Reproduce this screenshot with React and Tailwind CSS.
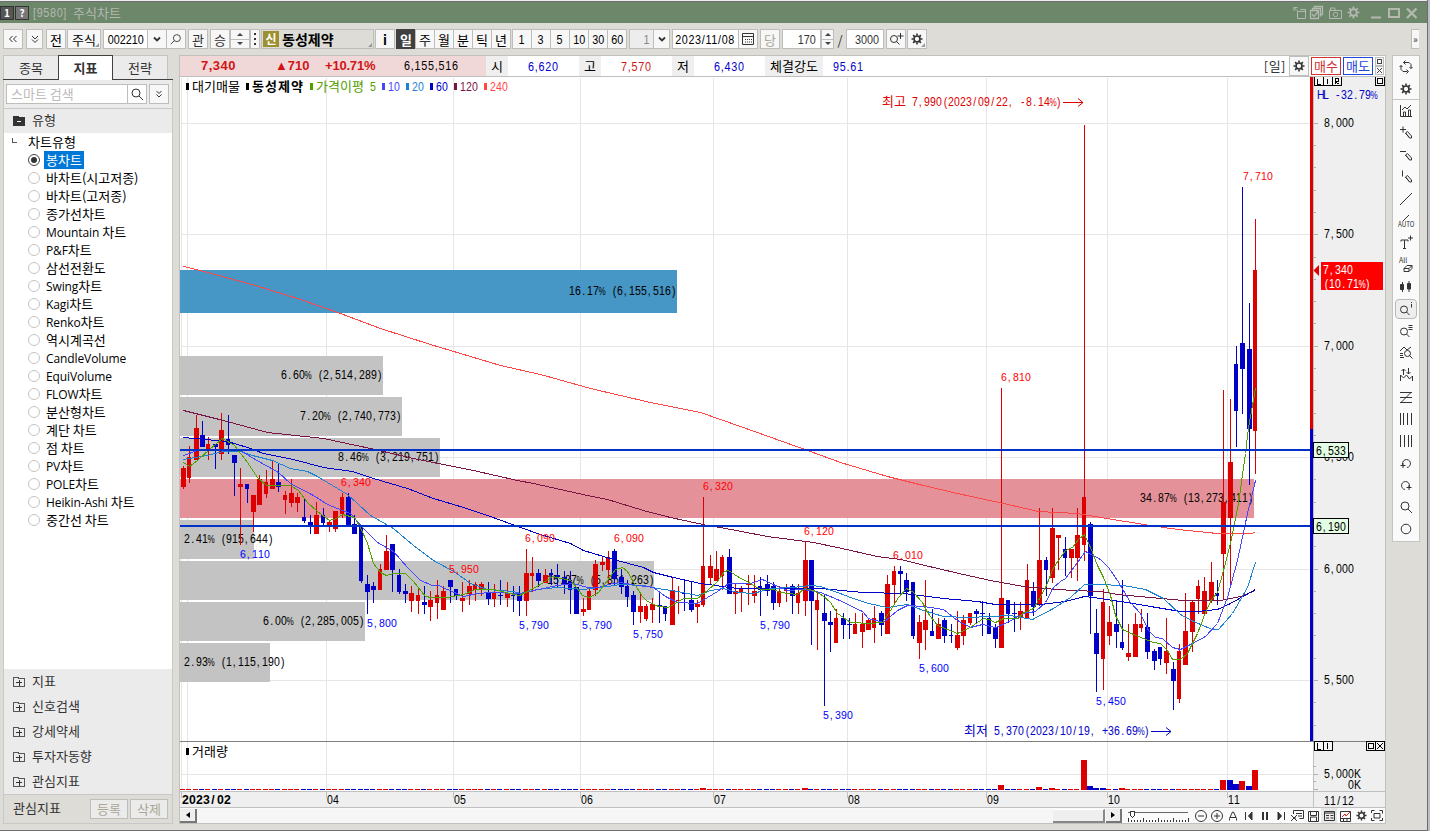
import React from 'react';
import clsx from 'clsx';

const RED = '#dc0000';
const BLUE = '#0000c8';

// high, body top, body bottom, low, direction (1 = up, 0 = down)
const candles = [
  [466, 468, 487, 489, 1], [446, 457, 478, 483, 1], [415, 428, 460, 460, 1], [421, 435, 447, 447, 0],
  [437, 444, 449, 460, 1], [444, 444, 447, 469, 0], [413, 430, 454, 460, 1], [415, 439, 445, 454, 0],
  [455, 455, 463, 496, 0], [468, 484, 487, 545, 1], [484, 484, 489, 503, 0], [495, 495, 512, 532, 1],
  [475, 479, 505, 505, 1], [470, 482, 494, 498, 1], [460, 479, 489, 489, 1], [464, 482, 487, 492, 0],
  [491, 495, 500, 514, 1], [479, 493, 503, 507, 1], [493, 497, 503, 512, 1], [498, 517, 521, 523, 0],
  [515, 522, 525, 534, 0], [502, 515, 534, 534, 1], [508, 515, 523, 525, 0], [520, 522, 527, 532, 1],
  [511, 511, 529, 532, 1], [493, 497, 514, 518, 1], [493, 497, 525, 525, 0], [515, 524, 534, 534, 0],
  [525, 525, 581, 583, 0], [575, 584, 592, 614, 0], [582, 586, 590, 603, 0], [564, 569, 590, 590, 1],
  [535, 551, 570, 570, 1], [544, 544, 570, 592, 0], [569, 575, 592, 594, 0], [584, 591, 594, 603, 0],
  [586, 593, 601, 612, 1], [589, 595, 601, 614, 1], [586, 602, 605, 614, 0], [591, 600, 607, 621, 1],
  [580, 595, 603, 619, 1], [586, 591, 610, 610, 1], [580, 580, 587, 603, 0], [589, 589, 596, 600, 0],
  [582, 598, 601, 612, 1], [580, 586, 594, 605, 1], [582, 584, 590, 601, 1], [582, 584, 589, 596, 1],
  [582, 593, 599, 605, 0], [584, 593, 599, 607, 1], [580, 595, 596, 605, 0], [582, 593, 598, 607, 1],
  [586, 595, 596, 612, 0], [586, 593, 601, 616, 0], [549, 573, 601, 616, 1], [557, 573, 576, 592, 1],
  [569, 573, 581, 587, 0], [569, 575, 583, 583, 1], [569, 573, 575, 585, 0], [564, 575, 577, 587, 0],
  [571, 577, 585, 594, 0], [571, 580, 590, 614, 0], [587, 587, 614, 614, 0], [598, 609, 612, 616, 1],
  [588, 591, 610, 610, 1], [560, 564, 590, 596, 1], [556, 562, 565, 571, 1], [551, 557, 570, 585, 1],
  [549, 551, 579, 585, 0], [569, 577, 587, 594, 0], [580, 586, 597, 607, 0], [591, 595, 612, 625, 0],
  [594, 606, 612, 623, 1], [604, 606, 619, 621, 1], [598, 604, 610, 623, 1], [593, 605, 606, 623, 0],
  [606, 606, 614, 621, 0], [577, 590, 625, 625, 1], [586, 600, 601, 614, 1], [580, 593, 594, 611, 0],
  [582, 600, 610, 612, 0], [600, 604, 607, 623, 1], [497, 566, 605, 607, 1], [555, 566, 578, 584, 1],
  [551, 569, 581, 581, 1], [555, 557, 576, 590, 1], [549, 557, 594, 594, 0], [584, 591, 594, 614, 1],
  [586, 588, 592, 612, 1], [575, 584, 585, 605, 1], [575, 591, 596, 603, 1], [577, 586, 590, 616, 0],
  [575, 584, 591, 596, 0], [582, 586, 603, 610, 0], [586, 591, 603, 607, 1], [584, 590, 591, 602, 1],
  [584, 586, 596, 614, 0], [584, 593, 603, 614, 1], [541, 560, 601, 616, 1], [560, 560, 601, 645, 0],
  [591, 600, 610, 650, 1], [595, 613, 621, 706, 0], [611, 622, 625, 652, 0], [609, 618, 643, 643, 1],
  [613, 618, 625, 639, 0], [618, 624, 625, 639, 0], [613, 624, 634, 634, 1], [613, 624, 632, 648, 1],
  [618, 620, 630, 630, 1], [606, 618, 628, 643, 1], [611, 613, 625, 636, 0], [575, 584, 634, 634, 1],
  [566, 571, 585, 603, 1], [566, 571, 574, 593, 0], [573, 580, 592, 601, 0], [582, 582, 636, 639, 0],
  [615, 622, 643, 659, 1], [580, 620, 630, 650, 1], [609, 631, 636, 636, 0], [618, 624, 639, 639, 1],
  [618, 620, 636, 643, 0], [624, 635, 636, 643, 0], [611, 635, 648, 650, 1], [615, 620, 636, 645, 1],
  [613, 613, 623, 625, 1], [609, 611, 614, 623, 0], [601, 613, 614, 636, 0], [613, 618, 634, 634, 0],
  [624, 627, 639, 648, 0], [388, 598, 648, 648, 1], [600, 600, 614, 623, 0], [602, 613, 614, 632, 0],
  [602, 611, 618, 630, 1], [564, 580, 618, 618, 1], [582, 591, 607, 616, 0], [508, 560, 605, 606, 1],
  [557, 560, 570, 596, 0], [508, 528, 578, 583, 1], [535, 535, 538, 570, 1], [537, 549, 558, 576, 0],
  [549, 549, 558, 578, 1], [508, 535, 558, 581, 1], [125, 497, 545, 561, 1], [522, 524, 596, 634, 0],
  [609, 633, 654, 692, 0], [589, 602, 659, 690, 1], [606, 622, 636, 645, 1], [600, 624, 632, 648, 0],
  [580, 642, 648, 650, 0], [624, 653, 657, 661, 1], [613, 624, 657, 657, 1], [609, 624, 628, 632, 1],
  [613, 627, 652, 659, 0], [649, 651, 661, 670, 0], [647, 647, 659, 665, 0], [618, 651, 663, 674, 1],
  [662, 669, 681, 710, 0], [644, 651, 699, 703, 1], [593, 631, 665, 665, 1], [600, 602, 632, 652, 1],
  [580, 586, 599, 614, 1], [577, 591, 614, 616, 1], [562, 582, 600, 603, 1], [580, 593, 596, 605, 0],
  [390, 502, 554, 600, 1], [399, 462, 518, 585, 1], [346, 364, 411, 447, 0], [187, 343, 369, 414, 0],
  [303, 349, 429, 485, 0], [219, 270, 431, 474, 1],
];

const volumes = {
  82: [2, 1], 98: [2, 1], 129: [5, 1], 135: [3, 1], 137: [2, 1], 142: [30, 1], 143: [4, 0], 144: [2, 0], 145: [2, 0],
  148: [2, 1], 164: [10, 1], 165: [10, 0], 166: [6, 0], 167: [9, 1], 168: [4, 0], 169: [20, 1],
};

const averages = [
  ['#ff4646', '183,266 200,270 255,285 300,299 340,313 380,328 430,344 500,365 540,374 590,388 650,402 700,412 740,426 810,451 840,462 887,476 923,485 957,493 1003,503 1038,511 1077,513 1100,517 1150,525 1170,528 1187,530 1217,533 1250,533 1255,532'],
  ['#781446', '183,410 223,420 267,432 323,438 370,448 413,458 473,470 517,480 533,483 587,495 607,499 643,510 670,517 707,525 720,527 767,536 813,542 837,547 877,556 900,559 933,567 963,574 990,580 1023,586 1043,588 1073,590 1100,591 1117,594 1150,597 1183,600 1220,600 1240,596 1255,590'],
  ['#0000c8', '183,437 227,441 247,447 263,453 293,459 323,467 352,471 373,478 407,488 433,498 463,507 490,516 520,527 540,534 570,543 583,550 613,559 643,567 653,572 673,577 700,583 737,588 773,588 820,588 863,592 903,593 943,598 977,601 995,604 1040,604 1065,601 1084,596 1100,598 1133,603 1150,606 1180,611 1197,611 1217,609 1230,603 1255,589'],
  ['#1e82d2', '183,459 207,455 222,451 240,451 252,455 272,460 290,468 307,471 315,475 327,482 347,494 357,503 370,515 393,528 413,545 433,560 455,572 470,583 487,589 513,591 520,593 537,589 557,587 583,589 607,586 620,584 643,585 657,588 677,591 697,595 710,590 723,588 737,592 753,593 770,588 792,587 810,585 820,586 837,592 850,597 868,603 887,607 907,604 923,610 943,616 967,617 990,616 1010,615 1032,619 1053,608 1070,597 1084,584 1098,584 1123,585 1145,589 1163,598 1180,614 1193,621 1212,629 1218,629 1232,613 1247,587 1255,562'],
  ['#4646ff', '183,455 197,450 240,450 253,458 278,472 290,483 313,495 327,504 342,510 350,513 362,527 377,542 393,551 407,567 420,580 432,585 438,585 447,589 463,596 477,593 490,592 520,593 538,589 557,585 573,583 587,587 598,587 608,584 620,582 637,585 653,587 665,596 677,602 697,603 707,597 717,591 728,583 750,583 762,579 775,585 787,590 803,589 820,592 837,599 862,611 868,618 883,622 897,610 907,605 923,606 943,609 957,620 970,627 982,624 995,627 1007,622 1023,613 1035,611 1045,602 1053,587 1060,581 1065,578 1077,562 1085,551 1100,559 1108,567 1117,580 1130,602 1140,613 1148,630 1155,637 1162,638 1172,647 1180,649 1192,643 1205,636 1217,623 1227,597 1237,560 1247,513 1255,480'],
  ['#50a000', '183,462 189,466 197,460 209,449 222,438 234,445 247,462 257,477 266,485 290,485 298,490 307,502 317,511 329,520 336,518 342,514 354,517 360,527 367,543 373,563 380,572 386,575 393,573 405,573 413,581 425,596 431,597 447,597 463,594 475,589 494,589 505,592 519,595 527,591 540,584 552,576 570,580 577,588 582,595 589,597 598,592 607,580 615,569 622,567 627,571 635,585 642,596 647,601 658,606 668,607 683,598 697,598 707,590 717,581 724,571 728,570 737,576 750,583 760,589 773,589 780,592 797,594 804,588 813,590 822,595 830,602 837,613 843,617 850,622 870,623 882,622 890,610 898,597 906,588 913,592 922,602 927,612 937,625 947,629 957,633 968,628 983,618 988,619 995,622 1003,618 1018,618 1022,613 1033,608 1038,600 1046,585 1053,567 1065,550 1072,547 1078,539 1084,534 1090,547 1097,565 1103,577 1110,595 1115,615 1122,629 1133,634 1153,642 1160,643 1167,650 1172,659 1180,659 1187,653 1197,633 1205,612 1211,599 1217,592 1223,570 1230,543 1238,503 1245,453 1248,427 1252,405 1255,388'],
];

// y, height, right edge, colour, label, label x
const bands = [
  [270, 43, 677, '#4696c6', '16.17% (6,155,516)', 569],
  [356, 39, 383, '#c3c3c3', '6.60% (2,514,289)', 281],
  [397, 39, 402, '#c3c3c3', '7.20% (2,740,773)', 300],
  [438, 39, 440, '#c3c3c3', '8.46% (3,219,751)', 338],
  [479, 39, 1254, '#e59199', '34.87% (13,273,411)', 1140],
  [520, 39, 254, '#c3c3c3', '2.41% (915,644)', 184],
  [561, 39, 654, '#c3c3c3', '15.37% (5,851,263)', 547],
  [602, 39, 365, '#c3c3c3', '6.00% (2,285,005)', 263],
  [643, 39, 270, '#c3c3c3', '2.93% (1,115,190)', 184],
];

const peaks = [
  ['6,340', 341, 482], ['5,950', 449, 569], ['6,090', 525, 538], ['6,090', 614, 538], ['6,320', 703, 486],
  ['6,120', 804, 531], ['6,010', 893, 555], ['6,810', 1001, 377], ['7,710', 1243, 176],
];
const troughs = [
  ['6,110', 240, 554], ['5,800', 367, 623], ['5,790', 519, 625], ['5,790', 582, 625], ['5,750', 633, 634],
  ['5,790', 760, 625], ['5,390', 823, 715], ['5,600', 919, 668], ['5,450', 1096, 701],
];

const months = [['04', 326], ['05', 453], ['06', 580], ['07', 713], ['08', 847], ['09', 986], ['10', 1107], ['11', 1227]];
const prices = [['8,000', 123], ['7,500', 234], ['7,000', 346], ['6,500', 457], ['6,000', 569], ['5,500', 680]];

const chartTypes = [
  '봉차트', '바차트(시고저종)', '바차트(고저종)', '종가선차트', 'Mountain 차트', 'P&F차트', '삼선전환도', 'Swing차트',
  'Kagi차트', 'Renko차트', '역시계곡선', 'CandleVolume', 'EquiVolume', 'FLOW차트', '분산형차트', '계단 차트',
  '점 차트', 'PV차트', 'POLE차트', 'Heikin-Ashi 차트', '중간선 차트',
];

const candleX = (i) => 183.6 + i * 6.343;

// how far a narrow glyph is moved inside its cell
const nudge = { ',': 0.8, '.': 1.2, '/': 1.3, '(': 1.8, ')': 1, '-': 1, '%': -0.4 };

// Fixed pitch label: 6px per latin character, 12px per hangul syllable
const Label = ({ x, y, children, fill = '#000', size = 13, bold = false, pitch = 6 }) => {
  const squeeze = pitch / (size * 0.57);
  let at = x;
  return children.match(/[가-힣]+|[^가-힣]+/g).map((run) => {
    const wide = run[0] >= '가';
    const step = wide ? pitch * 2 : pitch;
    const scale = wide ? 1 : squeeze;
    const xs = [...run].map((c, i) => ((at + i * step + (nudge[c] || 0)) / scale).toFixed(2)).join(' ');
    at += run.length * step;
    return (
      <text
        key={at}
        className="whitespace-pre"
        x={xs}
        y={y}
        transform={wide ? undefined : `scale(${scale} 1)`}
        fill={fill}
        fontSize={size}
        fontWeight={bold ? 700 : 400}
      >
        {run.split(/(%)/).map((part, i) => (part === '%' ? <tspan key={i} fontSize={size - 3}>%</tspan> : part))}
      </text>
    );
  });
};

const Arrow = ({ x, y, color }) => (
  <path d={`M${x} ${y}h20m-5 -4l5 4l-5 4`} fill="none" stroke={color} />
);

const BoxGlyph = ({ x, y, children }) => (
  <g>
    <rect x={x + 0.5} y={y + 0.5} width="9" height="9" fill="#f5f5f5" stroke="#000" />
    {children}
  </g>
);

const Chart = () => (
  <svg
    className="block h-[731px] w-[1205px] font-['Liberation_Sans','Noto_Sans_CJK_KR',sans-serif]"
    viewBox="180 77 1205 731"
  >
    <g shapeRendering="crispEdges">
      <rect x="180" y="77" width="1134" height="715" fill="#fff" />
      <rect x="1314" y="77" width="72" height="731" fill="#efefef" />
      <rect x="180" y="792" width="1134" height="16" fill="#efefef" />
      <g fill="#e6e6e6">
        <rect x="181" y="78" width="1" height="712" />
        <rect x="187" y="78" width="1" height="712" />
        {months.map(([m, x]) => <rect key={m} x={x} y="78" width="1" height="712" />)}
        {prices.map(([p, y]) => <rect key={p} x="181" y={y} width="1130" height="1" />)}
        <rect x="181" y="774" width="1132" height="1" />
      </g>
      {bands.map(([y, h, right, fill]) => (
        <rect key={y} x="180" y={y} width={right - 180} height={h} fill={fill} />
      ))}
    </g>

    {bands.map(([y, h, , , text, x]) => (
      <Label key={y} x={x} y={y + Math.floor(h / 2) + 4}>{text}</Label>
    ))}

    <g shapeRendering="crispEdges">
      {candles.map(([hi, top, bottom, lo, up], i) => {
        const x = Math.floor(candleX(i));
        return (
          <g key={i} fill={up ? RED : BLUE}>
            <rect x={x} y={hi} width="1" height={Math.max(1, lo - hi)} />
            <rect x={x - 2} y={top} width={i % 3 === 1 ? 4 : 5} height={Math.max(1, bottom - top)} />
          </g>
        );
      })}
      {candles.map((c, i) => {
        const [h, up] = volumes[i] || [1, c[4]];
        return <rect key={i} x={Math.floor(candleX(i)) - 3} y={790 - h} width={h > 1 ? 6 : 5} height={h} fill={up ? RED : BLUE} />;
      })}
      {averages.map(([color, points]) => (
        <polyline key={color} points={points} fill="none" stroke={color} strokeWidth="1" transform="translate(0.5 0.5)" />
      ))}
      <rect x="180" y="449" width="1133" height="2" fill="#0032c8" />
      <rect x="180" y="525" width="1133" height="2" fill="#0032c8" />
    </g>

    {peaks.map(([t, x, y]) => <Label key={t + x} x={x} y={y + 4} size={11.5} fill="#ff0000">{t}</Label>)}
    {troughs.map(([t, x, y]) => <Label key={t + x} x={x} y={y + 4} size={11.5} fill="#0000ff">{t}</Label>)}
    <Label x={882} y={106} fill={RED}>최고 7,990(2023/09/22, -8.14%)</Label>
    <Arrow x={1063} y={102.5} color={RED} />
    <Label x={964} y={735} fill={BLUE}>최저 5,370(2023/10/19, +36.69%)</Label>
    <Arrow x={1151} y={731.5} color={BLUE} />

    {/* legend */}
    <g shapeRendering="crispEdges">
      <rect x="186" y="83" width="3" height="7" />
      <rect x="246" y="83" width="3" height="7" />
      <rect x="310" y="83" width="3" height="7" fill="#50a000" />
      <rect x="382" y="83" width="3" height="7" fill="#4646ff" />
      <rect x="406" y="83" width="3" height="7" fill="#1e82d2" />
      <rect x="430" y="83" width="3" height="7" fill="#0000c8" />
      <rect x="454" y="83" width="3" height="7" fill="#781446" />
      <rect x="484" y="83" width="3" height="7" fill="#ff4646" />
      <rect x="186" y="748" width="3" height="7" />
    </g>
    <Label x={192} y={91}>대기매물</Label>
    <Label x={252} y={91} bold pitch={6.5}>동성제약</Label>
    <Label x={316} y={91} fill="#50a000">가격이평 5</Label>
    <Label x={388} y={91} fill="#4646ff">10</Label>
    <Label x={412} y={91} fill="#1e82d2">20</Label>
    <Label x={436} y={91} fill="#0000c8">60</Label>
    <Label x={460} y={91} fill="#781446">120</Label>
    <Label x={490} y={91} fill="#ff4646">240</Label>
    <Label x={192} y={756}>거래량</Label>

    {/* price axis */}
    <g shapeRendering="crispEdges">
      <rect x="1313" y="77" width="1" height="731" fill="#c0c0c0" />
      <rect x="1310" y="77" width="3" height="352" fill={RED} />
      <rect x="1310" y="429" width="3" height="312" fill={BLUE} />
      {prices.map(([p, y]) => <rect key={p} x="1314" y={y} width="4" height="1" fill="#b0b0b0" />)}
      {[145, 167, 190, 212, 257, 279, 301, 323, 368, 390, 413, 435, 479, 502, 524, 546, 591, 613, 635, 658, 702, 725, 766, 774, 781, 789].map((y) => (
        <rect key={y} x="1314" y={y} width={y === 774 || y === 789 ? 4 : 2} height="1" fill="#b0b0b0" />
      ))}
      <rect x="180" y="741" width="1205" height="1" fill="#808080" />
      <rect x="180" y="791" width="1205" height="1" fill="#c0c0c0" />
      {months.map(([m, x]) => <rect key={m} x={x} y="792" width="1" height="6" fill="#c0c0c0" />)}
      <rect x="181" y="792" width="1" height="6" fill="#c0c0c0" />
      <rect x="180" y="807" width="1205" height="1" fill="#c0c0c0" />
    </g>
    {prices.map(([p, y]) => <Label key={p} x={1324} y={y + 4}>{p}</Label>)}
    <Label x={1317} y={99} fill={BLUE}>HL -32.79%</Label>
    <path d="M1313.5 270.5l5.5 -5.5v11z" fill="#e00000" />
    <rect x="1321" y="262" width="62" height="28" fill="#ff0000" />
    <Label x={1323} y={274} fill="#fff">7,340</Label>
    <Label x={1323} y={288} fill="#fff">(10.71%)</Label>
    {[['6,533', 442], ['6,190', 518]].map(([t, y]) => (
      <g key={t}>
        <rect x="1313.5" y={y + 0.5} width="35" height="15" fill="#e4ffe4" stroke="#000" />
        <Label x={1316} y={y + 13}>{t}</Label>
      </g>
    ))}
    <g fill="none" stroke="#000" shapeRendering="crispEdges">
      <BoxGlyph x={1314} y={76}><path d="M1317.5 79v5h3" /></BoxGlyph>
      <BoxGlyph x={1323} y={76}><path d="M1327.5 79v5" /></BoxGlyph>
      <BoxGlyph x={1332} y={76}><path d="M1335.5 84v-5.500h3v3h-3l3 2.500" /></BoxGlyph>
      <BoxGlyph x={1375} y={76}><rect x="1377.5" y="78.500" width="5" height="5" /></BoxGlyph>
      <BoxGlyph x={1314} y={741}><path d="M1317.5 743v6h3" /></BoxGlyph>
      <BoxGlyph x={1323} y={741}><path d="M1327.5 743v6" /></BoxGlyph>
      <BoxGlyph x={1366} y={741}><rect x="1368.5" y="743.5" width="5" height="5" /></BoxGlyph>
      <BoxGlyph x={1375} y={741}><path d="M1377 743l6 6m0 -6l-6 6" /></BoxGlyph>
    </g>
    <Label x={1324} y={778}>5,000K</Label>
    <Label x={1348} y={789}>0K</Label>
    <Label x={1324} y={805}>11/12</Label>
    <Label x={182} y={804} bold pitch={7}>2023/02</Label>
    {months.map(([m, x]) => <Label key={m} x={x + 1} y={804}>{m}</Label>)}
  </svg>
);

const Svg = ({ children, className = 'h-4 w-4' }) => (
  <svg viewBox="0 0 16 16" className={clsx('shrink-0', className)} fill="none" stroke="currentColor" strokeWidth="1">
    {children}
  </svg>
);

const Gear = ({ className = 'h-3 w-3' }) => (
  <svg viewBox="0 0 12 12" className={clsx('shrink-0', className)} fill="none" stroke="currentColor">
    <circle cx="6" cy="6" r="3" strokeWidth="1.700" />
    <path d="M6 .5v2M6 9.500v2M.5 6h2M9.500 6h2M2.100 2.100l1.500 1.500M8.400 8.400l1.500 1.500M2.100 9.900l1.500-1.500M8.400 3.600l1.500-1.500" strokeWidth="1.600" />
  </svg>
);

const Magnifier = ({ className, flip = false }) => (
  <Svg className={className}>
    <g transform={flip ? 'matrix(-1 0 0 1 16 0)' : undefined}>
      <circle cx="7" cy="7" r="4" />
      <path d="M10 10l4 4" />
    </g>
  </Svg>
);

const Corner = () => (
  <svg viewBox="0 0 4 4" className="absolute right-px bottom-px h-1 w-1"><path d="M4 0v4H0z" fill="#999" /></svg>
);

const Btn = ({ className = '', children }) => (
  <div className={clsx('relative flex h-5 shrink-0 items-center justify-center border border-[#bdbdb9] bg-[#f7f7f7]', className)}>
    {children}
  </div>
);

const Spinner = ({ className }) => (
  <div className={clsx('flex h-5 shrink-0 flex-col border border-[#bdbdb9] bg-[#f7f7f7]', className)}>
    <div className="flex flex-1 items-center justify-center border-b border-[#bdbdb9]">
      <svg viewBox="0 0 6 3" className="h-[3px] w-1.5"><path d="M0 3l3-3l3 3z" fill="#444" /></svg>
    </div>
    <div className="flex flex-1 items-center justify-center">
      <svg viewBox="0 0 6 3" className="h-[3px] w-1.5"><path d="M0 0l3 3l3-3z" fill="#444" /></svg>
    </div>
  </div>
);

// Condensed digits used by every numeric field
const Num = ({ className = '', children }) => (
  <span className={clsx("inline-block shrink-0 scale-x-[0.83] whitespace-nowrap font-['Liberation_Sans',sans-serif] text-[13px]", className)}>
    {children}
  </span>
);

const TitleBar = () => (
  <div className="flex h-[21px] w-[1427px] items-center bg-[#6d876b] text-[#b4b9b0]">
    <div className="flex h-[14px] w-[14px] items-center justify-center border border-[#333] bg-[#555] text-[10px] font-bold text-white">1</div>
    <div className="ml-px flex h-[14px] w-[14px] items-center justify-center border border-[#333] bg-[#777] text-[10px] font-bold text-white">?</div>
    <Num className="ml-1 w-[34px] origin-left tracking-[0.8px]">[9580]</Num>
    <span className="ml-1.5 text-[13px]">주식차트</span>
    <div className="ml-auto flex items-center pr-[7px]">
      <Svg><path d="M5 13.500h8.500v-9h-5M13.500 6.500h-8v4M5.500 10v3.500M2 2.500l4 4M2 6V2.500h3.500M8.500 4.500h5" /></Svg>
      <Svg className="ml-px h-4 w-4"><path d="M5.500 4v-2.500h8v8h-2M3.500 6.500v-3h8v8M1.500 5.500h8v8h-8zM3 9l2 2.500l4-5" strokeWidth="1.300" /></Svg>
      <Svg className="ml-0.5 h-4 w-4"><path d="M2.500 5.500h12v8h-12zM3.500 5v-2h4l1 2" /><circle cx="8.500" cy="9.500" r="2.200" /></Svg>
      <Gear className="ml-1 h-[13px] w-[13px]" />
      <Svg className="ml-2 h-4 w-4"><path d="M3 12.500h10" strokeWidth="2" /></Svg>
      <Svg className="ml-0.5 h-4 w-4"><path d="M3 4h10v8h-10z" strokeWidth="2" /></Svg>
      <Svg className="ml-0.5 h-4 w-4"><path d="M3 3.500l9.500 9.500M12.500 3.500l-9.500 9.500" strokeWidth="2.300" /></Svg>
    </div>
  </div>
);

const periods = ['주', '월', '분', '틱', '년'];
const minutes = ['3', '5', '10', '30', '60'];

const Toolbar = () => (
  <div className="flex h-[32px] items-center pl-[3px] text-[13px] leading-none text-[#333]">
    <Btn className="w-5"><Svg><path d="M7.500 5l-3 3l3 3M11.500 5l-3 3l3 3" /></Svg></Btn>
    <Btn className="ml-[3px] w-[17px]"><Svg><path d="M5 5l3 3l3-3M5 8.500l3 3l3-3" /></Svg></Btn>
    <Btn className="ml-[3px] w-5 text-black">전</Btn>
    <Btn className="ml-px w-[34px] text-black">주식<Corner /></Btn>
    <Btn className="ml-0.5 w-[45px] bg-white! text-black"><Num>002210</Num></Btn>
    <Btn className="-ml-px w-5"><Svg><path d="M5 6.500l3 3l3-3" strokeWidth="1.800" /></Svg></Btn>
    <Btn className="-ml-px w-5"><Magnifier flip className="h-3.5 w-3.5" /></Btn>
    <Btn className="ml-0.5 w-5">관</Btn>
    <Btn className="ml-0.5 w-5">승</Btn>
    <Spinner className="w-5" />
    <Btn className="w-2.5"><svg viewBox="0 0 2 12" className="h-3 w-0.5" fill="#333"><path d="M0 0h2v2H0zM0 5h2v2H0zM0 10h2v2H0z" /></svg></Btn>
    <Btn className="ml-px w-[113px] justify-start! bg-[#dddcd6]!">
      <span className="ml-px flex h-4 w-4 items-center justify-center bg-[#9d9030] text-[12px] font-bold text-white">신</span>
      <span className="ml-[3px] text-[14px] font-bold text-black">동성제약</span>
      <Corner />
    </Btn>
    <Btn className="ml-px w-5 font-bold text-black">i</Btn>
    <Btn className="ml-px w-5 border-[#404040]! bg-[#404040]! font-bold text-white">일</Btn>
    {periods.map((p) => <Btn key={p} className="-ml-px w-5 text-black">{p}</Btn>)}
    <Btn className="ml-px w-5 text-black"><Num>1</Num></Btn>
    {minutes.map((m) => <Btn key={m} className="-ml-px w-5 text-black"><Num>{m}</Num></Btn>)}
    <Btn className="ml-0.5 w-[25px] justify-end! bg-[#ededed]! pr-[3px] text-[#888]"><Num>1</Num></Btn>
    <Btn className="-ml-px w-[17px]"><Svg><path d="M5 6.500l3 3l3-3" strokeWidth="1.800" /></Svg></Btn>
    <Btn className="ml-0.5 w-[67px] bg-white! text-black"><Num className="tracking-[0.8px]">2023/11/08</Num></Btn>
    <Btn className="-ml-px w-5"><Svg><path d="M2.500 2.500h11v11h-11zM2.500 5.500h11" /><path d="M5 8.500h7M5 11h7" strokeDasharray="1 1" /></Svg></Btn>
    <Btn className="ml-0.5 w-5 text-[#aaa796]">당</Btn>
    <Btn className="ml-0.5 w-[39px] justify-end! bg-white! pr-1"><Num className="origin-right">170</Num></Btn>
    <Spinner className="w-[13px]" />
    <span className="w-3 text-center">/</span>
    <Btn className="w-[38px] justify-end! bg-white! pr-1"><Num className="origin-right">3000</Num></Btn>
    <Btn className="ml-0.5 w-5"><Svg><circle cx="6" cy="8" r="3.500" /><path d="M8.500 10.500l3 3M12.500 2v6M9.500 5h6" /></Svg></Btn>
    <Btn className="ml-px w-5"><Gear /><Corner /></Btn>
    <Btn className="ml-auto mr-[8px] w-2 border-r-0! text-[10px]">»</Btn>
  </div>
);

const Folder = ({ open = false }) => (
  <svg viewBox="0 0 12 12" className="mt-0.5 h-3 w-3" stroke={open ? '#333' : '#555'} fill={open ? '#333' : 'none'} shapeRendering="crispEdges">
    <path d="M.5 1.500h5v1h6v8h-11z" />
    <path d={open ? 'M4 6.500h4' : 'M3 6.500h6M6 4v5.500'} stroke={open ? '#fff' : '#333'} />
  </svg>
);

// Latin runs sit a size below the hangul beside them
const Mixed = ({ text }) =>
  text.match(/[A-Za-z&-]+|[^A-Za-z&-]+/g).map((run) =>
    /[A-Za-z]/.test(run)
      ? <span key={run} className="font-['Open_Sans','Noto_Sans',sans-serif] text-[12px] tracking-[-0.1px]">{run}</span>
      : <span key={run}>{run}</span>
  );

const Sidebar = () => (
  <div className="flex h-[769px] w-[170px] flex-col text-[#333]">
    <div className="flex h-[25px] border-b border-[#404040] text-[13px]">
      <div className="flex h-6 w-[55px] items-center justify-center border-t border-l border-[#c4c4c4] bg-[#ebebeb]">종목</div>
      <div className="flex h-[25px] w-[55px] items-center justify-center border border-b-0 border-[#404040] bg-white font-bold">지표</div>
      <div className="flex h-6 w-[55px] items-center justify-center border-t border-r border-[#c4c4c4] bg-[#ebebeb]">전략</div>
    </div>
    <div className="flex h-[28px] items-center border-x border-[#c8c8c8] bg-[#ebebeb] pl-0.5">
      <Btn className="w-[122px] justify-start! bg-white! pl-1 text-[13px] text-[#bbb]">스마트 검색</Btn>
      <Btn className="-ml-px w-5 bg-white!"><Magnifier className="h-4 w-4" /></Btn>
      <Btn className="ml-0.5 w-5"><Svg><path d="M5.500 5l2.500 2.500l2.500-2.500M5.500 8.500l2.500 2.500l2.500-2.500" /></Svg></Btn>
    </div>
    <div className="flex h-[25px] items-center gap-[7px] border border-b-0 border-[#c8c8c8] bg-[#ebebeb] pb-0.5 pl-[9px] text-[13px]">
      <Folder open />유형
    </div>
    <div className="h-[536px] border-x border-[#c8c8c8] bg-white text-[13px] leading-[18px] text-black">
      <div className="flex h-[18px] items-center">
        <span className="mb-1 ml-2 h-[5px] w-[5px] border-b border-l border-[#555]" />
        <span className="ml-[11px] pb-px">차트유형</span>
      </div>
      {chartTypes.map((name, i) => (
        <div key={name} className="flex h-[18px] items-center pl-6">
          <span className={clsx('flex h-3 w-3 items-center justify-center rounded-full border bg-white', i ? 'border-[#c4c4c4]' : 'border-[#444]')}>
            {i === 0 && <span className="h-1.5 w-1.5 rounded-full bg-[#333]" />}
          </span>
          <span className={clsx('ml-1 h-[18px] px-0.5 leading-[17px] whitespace-pre', i === 0 && 'bg-[#0078d7] text-white')}><Mixed text={name} /></span>
        </div>
      ))}
    </div>
    <div className="h-[125px] border-x border-[#c8c8c8] bg-[#ebebeb] text-[13px]">
      {['지표', '신호검색', '강세약세', '투자자동향', '관심지표'].map((name) => (
        <div key={name} className="flex h-[25px] items-center gap-[7px] pb-0.5 pl-[9px]"><Folder />{name}</div>
      ))}
    </div>
    <div className="flex h-[30px] items-center border border-[#c8c8c8] pl-[9px] text-[13px]">
      <span className="pb-0.5">관심지표</span>
      <Btn className="ml-auto w-[38px] bg-[#ebebeb]! text-[#aaa796]">등록</Btn>
      <Btn className="mr-1 ml-0.5 w-[38px] bg-[#ebebeb]! text-[#aaa796]">삭제</Btn>
    </div>
  </div>
);

const InfoBar = () => (
  <div className="flex h-[21px] items-stretch border-b border-[#c0c0c0] bg-white text-[13px] leading-5">
    <div className="flex w-[306px] bg-[#f0d8d8] font-bold text-[#d21414]">
      <Num className="ml-[21px] w-[74px] scale-x-100! tracking-[0.5px]">7,340</Num>
      <Num className="w-[50px] scale-x-100!">▲710</Num>
      <Num className="w-[79px] scale-x-100! tracking-[-0.2px]">+10.71%</Num>
      <Num className="origin-left font-normal tracking-[0.9px] text-black">6,155,516</Num>
    </div>
    <div className="w-[22px] bg-[#efefef] text-center">시</div>
    <div className="w-[71px] pl-5 text-[#0000c8]"><Num className="origin-left tracking-[0.9px]">6,620</Num></div>
    <div className="w-[22px] bg-[#efefef] text-center">고</div>
    <div className="w-[71px] pl-5 text-[#d21414]"><Num className="origin-left tracking-[0.9px]">7,570</Num></div>
    <div className="w-[22px] bg-[#efefef] text-center">저</div>
    <div className="w-[71px] pl-5 text-[#0000c8]"><Num className="origin-left tracking-[0.9px]">6,430</Num></div>
    <div className="w-[58px] bg-[#efefef] text-center">체결강도</div>
    <div className="pl-2.5 text-[#0000c8]"><Num className="origin-left tracking-[0.9px]">95.61</Num></div>
    <div className="ml-auto flex items-center text-[#333]">
      <span className="mr-[3px] tracking-[0.5px]">[일]</span>
      <Btn className="w-5"><Gear /></Btn>
      <div className="ml-0.5 flex h-[18px] w-[30px] items-center justify-center border border-[#d23232] text-[#d23232]">매수</div>
      <div className="ml-0.5 flex h-[18px] w-[30px] items-center justify-center border border-[#1e46dc] text-[#1e46dc]">매도</div>
      <svg viewBox="0 0 10 18" className="ml-0.5 h-[18px] w-2.5" fill="#f7f7f7" stroke="#bdbdb9" shapeRendering="crispEdges">
        <path d="M.5 .5h8v8h-8zM.5 9.500h8v8h-8z" />
        <path d="M2.500 2.500h4v4h-4zM2 11l5 5M7 11l-5 5" stroke="#444" />
      </svg>
    </div>
  </div>
);

const winIcons = [
  <g key="i"><circle cx="8" cy="8" r="5.500" /><path d="M5 8h6" /></g>,
  <g key="i"><circle cx="8" cy="8" r="5.500" /><path d="M5 8h6M8 5v6" /></g>,
  <path key="i" d="M4.500 12.500v-2l3-6.500h1l3 6.500v2M5 9.500h6" />,
  <path key="i" d="M4.500 4v8M11 4v8l-3.500-4z" fill="currentColor" />,
  <path key="i" d="M6 4v8M10 4v8" strokeWidth="2" />,
  <path key="i" d="M11.500 4v8M5 4v8l3.500-4z" fill="currentColor" />,
  <path key="i" d="M4.500 6v-3.500h10v8h-4M7 5.500h6M9 8h4M2 7l6 6M8 7l-6 6M4 10h3" />,
  <path key="i" d="M3.500 3.500h10v10h-10zM5.500 3.500v4h6v-4M5.500 13v-4h6v4" />,
  <path key="i" d="M3.500 3.500h10v9h-10zM3.500 5h10M5 7.500h3M5 10h3M9.500 7.500h3M9.500 10h3" />,
  <g key="i"><path d="M3.500 3.500h10v10h-10zM3.500 10.500h10M6.500 11v2M10 11v2" /><path d="M5 9l3-3l1 2l4-4" stroke="#d22" /></g>,
  null,
  <path key="i" d="M2.500 5v-2.500h3M10.500 2.500h3v3M13.500 10v2.500h-3M5.500 12.500h-3v-2.500M5 5.500h6v4.500h-6z" />,
];

const BottomBar = () => (
  <div className="flex h-4 items-center border-b border-[#c0c0c0] bg-[#fafafa] text-[#333]">
    <div className="flex h-3.5 w-[17px] items-center justify-center border-r-2 border-b-2 border-[#777] bg-[#efefef]">
      <svg viewBox="0 0 4 6" className="h-1.5 w-1"><path d="M4 0v6l-4-3z" /></svg>
    </div>
    <div className="h-3.5 w-[856px] bg-[#f6f6f6]" />
    <div className="h-3.5 w-[52px] border-t border-r-2 border-b-2 border-[#888] border-t-white bg-[#efefef]" />
    <div className="ml-px flex h-3.5 w-4 items-center justify-center border-r-2 border-b-2 border-[#777] bg-[#efefef]">
      <svg viewBox="0 0 4 6" className="h-1.5 w-1"><path d="M0 0v6l4-3z" /></svg>
    </div>
    <svg viewBox="0 0 64 14" className="ml-[5px] h-3.5 w-16" fill="none" stroke="#333" shapeRendering="crispEdges">
      <path d="M1 3.500h60" stroke="#666" />
      <path d="M1.500 9v4M16.500 9v4M31.500 9v4M46.500 9v4M61.500 9v4" />
      <path d="M4 12h58" strokeDasharray="1 2" strokeWidth="2" />
      <path d="M3.500 2.500h4v4l-2 2l-2-2z" fill="#fff" />
    </svg>
    <div className="ml-0.5 flex">
      {winIcons.map((icon, i) => (
        <div key={i} className={clsx('flex h-[15px] w-4 items-center justify-center', i === 8 && 'bg-[#e8e8e8]')}>
          {icon ? <Svg>{icon}</Svg> : <Gear className="h-[11px] w-[11px]" />}
        </div>
      ))}
    </div>
  </div>
);

const pencil = 'M7.500 8l2-1.500l4 4.500v2h-2zM7.500 8l4 4.500';

const sideIcons = [
  <path key="i" d="M5.500 3.500h5.500l2 2v4M9.500 12.500h-4.500l-2-2v-4M7.500 1.500l-2 2l2 2M8.500 10.500l2 2l-2 2M1.500 8l1.500-1.500l1.500 1.500M11.500 8l1.500 1.500l1.500-1.500" />,
  null,
  <path key="i" d="M2.500 2v11.500h11.500M4 7l3-3l2 2l4-4M5.500 13v-4h2v4M10.500 13v-6h2v6" />,
  <path key="i" d={`M2 4.500h6M5 1.500v6${pencil}`} />,
  <path key="i" d={`M2 4.500h6${pencil}`} />,
  <path key="i" d={`M4.500 1.500v6${pencil}`} />,
  <path key="i" d="M2 14l12-12" />,
  null,
  <path key="i" d="M3 6.500v-1.500h7v1.500M6.500 5v8.500M5 13.500h3M12.500 .5v5M10 3h5" />,
  null,
  <path key="i" d="M4.500 3v10M2.500 5.500h3v5h-3zM11 2v11M9.500 4.500h3v5.500h-3z" fill="currentColor" />,
  <g key="i"><circle cx="6" cy="8.500" r="3.500" /><path d="M8.500 11l3 3M13.500 3v3.500M13.500 1v1" /></g>,
  <g key="i"><circle cx="6" cy="8.500" r="3.500" /><path d="M8.500 11l3 3M10.500 2.500h4M10.500 4.500h4M10.500 6.500h4" /></g>,
  <g key="i"><path d="M2 6l4-4l3 3l4-3M2 8.500h3M2 10.500h3M2 12.500h4" /><circle cx="9.500" cy="8.500" r="3" /><path d="M11.500 10.500l3 3" /></g>,
  <path key="i" d="M2.500 14v-6l3 3l3-3l3 4l3-3v5M5.500 8v-6M3.500 4l2-2l2 2M10.500 1v6M8.500 5l2 2l2-2" />,
  <path key="i" d="M2 3.500h12M2 8.500h12M2 13.500h12M13 3.500l-10 10" />,
  <path key="i" d="M2.500 2v12M5.500 2v12M9.500 2v12M13.500 2v12" />,
  <path key="i" d="M2.500 2v12M6.500 2v12M10.500 2v12M13.500 2v12" />,
  <path key="i" d="M5 10.500a4 4 0 1 1 4 2M2.500 10.500h5M5 8v5" />,
  <path key="i" d="M11 10.500a4 4 0 1 0 -4 2M8.500 10.500h5M11 8v5" />,
  <g key="i"><circle cx="7" cy="7" r="4" /><path d="M10 10l4 4" /></g>,
  <circle key="i" cx="8" cy="8" r="4.800" />,
];

const SideTools = () => (
  <div className="ml-1.5 h-[487px] w-7 border border-[#c4c4c4] bg-[#fafafa] text-[#333]">
    {sideIcons.map((icon, i) => (
      <div key={i} className={clsx('flex h-[22px] items-center justify-center', i === 1 && 'border-b border-[#c4c4c4]')}>
        {i === 1 && <Gear className="h-3 w-3" />}
        {i === 7 && (
          <div className="flex flex-col items-center text-[7px] leading-[7px]">
            <svg viewBox="0 0 6 6" className="h-1.5 w-1.5" stroke="currentColor"><path d="M0 6l6-6" /></svg>
            <span className="scale-x-90">AUTO</span>
          </div>
        )}
        {i === 9 && (
          <div className="flex flex-col text-[7px] leading-[6px]">
            All
            <svg viewBox="0 0 14 10" className="h-2.5 w-3.5" fill="none" stroke="currentColor"><path d="M5 5.500l3-3h5v3l-3 3h-5zM5 5.500h5v3M10 5.500l3-3" /></svg>
          </div>
        )}
        {icon && (
          <div className={clsx('flex h-5 w-[22px] items-center justify-center', i === 11 && 'rounded border border-[#b8b8b8] bg-[#eee]')}>
            <Svg>{icon}</Svg>
          </div>
        )}
      </div>
    ))}
  </div>
);

export default function App() {
  return (
    <div className="flex h-[831px] w-[1430px] overflow-hidden bg-[#b9bfc4] font-['Noto_Sans_CJK_KR',sans-serif]">
      <div className="flex w-[1428px] flex-col border-r border-b border-[#6e6e6e] bg-[#dddcd6]">
        <div className="h-[2px] shrink-0 border-b border-[#6e6e6e] bg-[#eee]" />
        <TitleBar />
        <Toolbar />
        <div className="flex pl-[3px]">
          <Sidebar />
          <div className="ml-1.5 flex h-[769px] w-[1207px] flex-col border border-b-0 border-[#c0c0c0]">
            <InfoBar />
            <Chart />
            <BottomBar />
          </div>
          <SideTools />
        </div>
      </div>
    </div>
  );
}
